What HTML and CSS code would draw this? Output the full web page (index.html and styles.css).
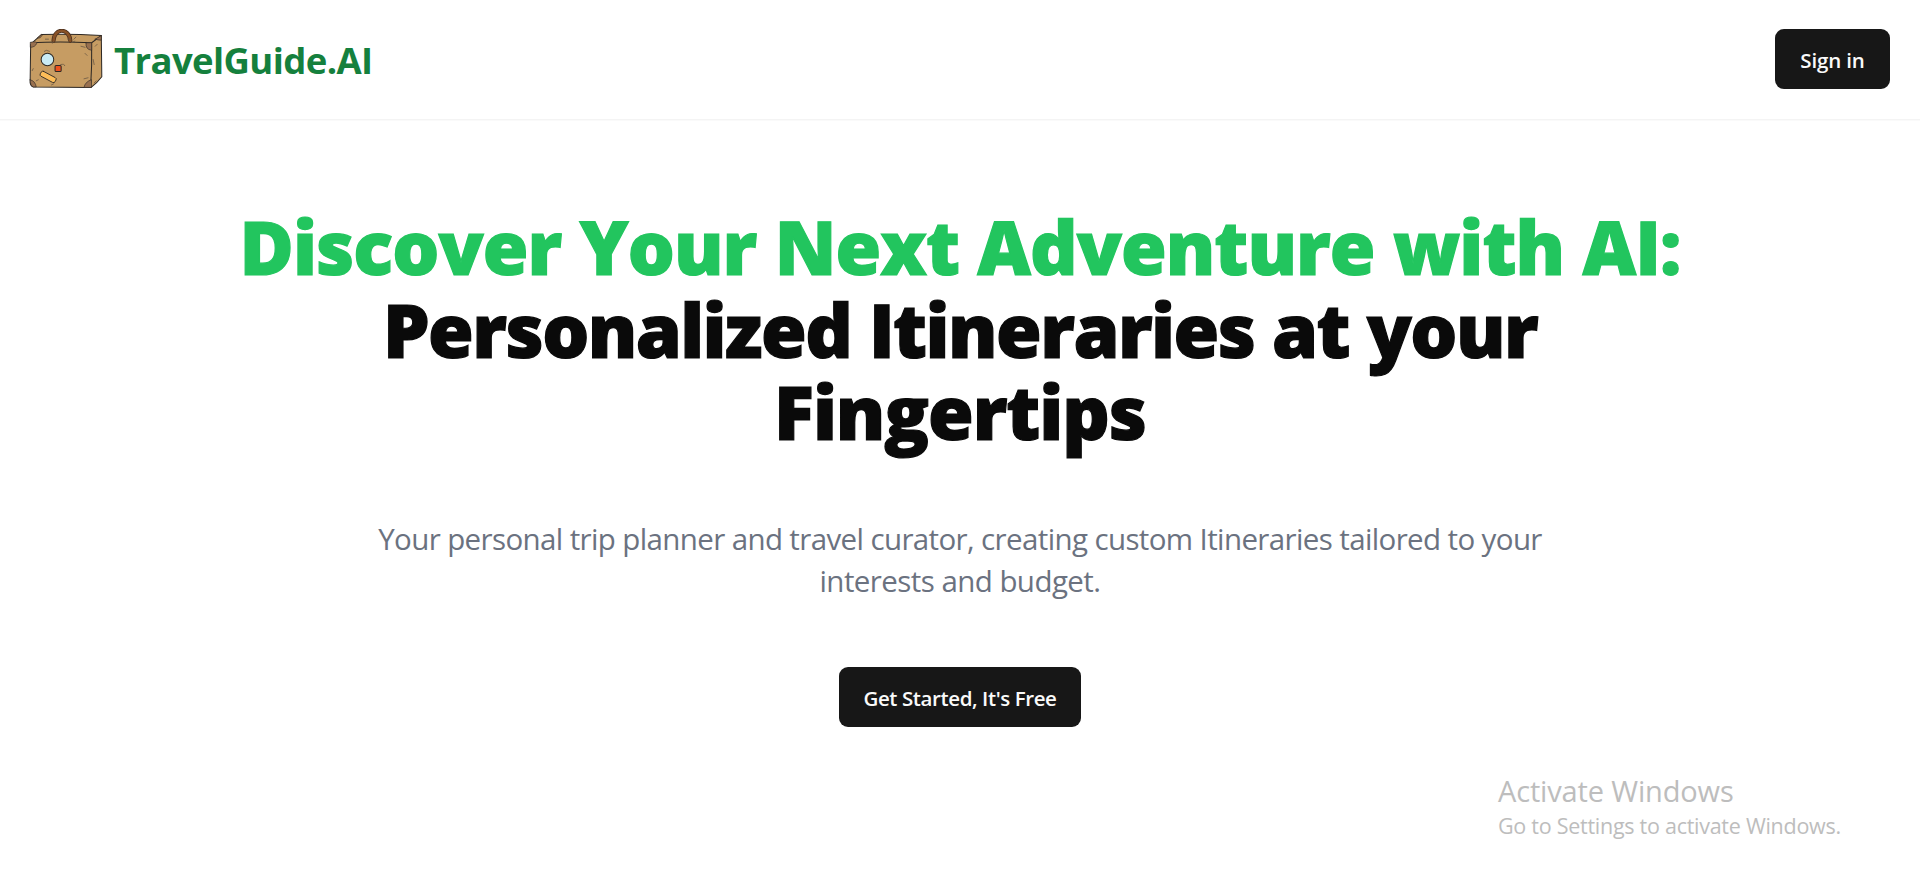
FILE: index.html
```html
<!DOCTYPE html>
<html lang="en">
<head>
<meta charset="utf-8">
<title>TravelGuide.AI</title>
<link rel="stylesheet" href="styles.css">
</head>
<body>
<header class="topbar">
  <a class="brand">
    <svg class="brand-icon" viewBox="0 0 75 62" fill="none" stroke="#2d2824" stroke-width="1" stroke-linecap="round" stroke-linejoin="round">
      <path d="M1.5 15 L12 5.5 Q40 4.5 71 6.5 L71.5 47 Q67 53 61 57.5 L4 57 Q0.500 56 1 50 Z" fill="#c69c63"/>
      <path d="M1.500 13.500 Q30 12 61.500 13.500 Q62 36 60.500 57.500 M61.500 13.500 L71 6.500"/>
      <path d="M1.500 13 Q8 12 7.500 14 Q6 18 1.500 18 Z M56 13.500 L61.500 13.500 V21 Q55 20 56 13.500 Z M1 50 Q6 51 7 57 H4 Q1 56 1 50 Z M61 50 Q55 52 54 57.500 H61 Z M65 10 L71 6.500 V11 Q68 11 65 10 Z M12 5.500 L8 9 Q11 10 13 6 Z" fill="#99704f" stroke-width=".6"/>
      <path d="M24 11.500 C24.500 -1.500 39.500 -1.500 40.500 11.500" stroke="#4a2f1d" stroke-width="4"/>
      <path d="M24 11.500 C24.500 -1.500 39.500 -1.500 40.500 11.500" stroke="#885126" stroke-width="2.600"/>
      <circle cx="18" cy="30" r="6.200" fill="#c9ebf6"/>
      <rect x="25.500" y="36" width="6" height="5.800" rx="1" fill="#ee511e"/>
      <rect x="10.500" y="44.500" width="16.500" height="5.400" rx="1.800" transform="rotate(28 18.800 47)" fill="#fdbd58" stroke-width=".8"/>
      <path d="M15 22l2-1 3 1M31 35q4-1 4 1M3 41l1-2M7 51l2-1M22 55l2-1M38 10l3 0M44 10l2-2M16 10l3 0M55 24l2 2M63 30l1 5M64 53l2-2M51 17l4 1M54 49l4-1M65 17l2-2M23 14l1-2M42 13l3-1" stroke="#6e5a45" stroke-width=".8"/>
    </svg>
    <span class="brand-name">TravelGuide.AI</span>
  </a>
  <button class="button sign-in">Sign in</button>
</header>
<main class="hero">
  <h1 class="headline">
    <span class="headline-accent">Discover Your Next Adventure with AI:</span>
    <span class="headline-main">Personalized Itineraries at your</span>
    <span class="headline-end">Fingertips</span>
  </h1>
  <p class="lead"><span class="lead-line">Your personal trip planner and travel curator, creating custom Itineraries tailored to your</span> <span class="lead-line lead-end">interests and budget.</span></p>
  <button class="button start">Get Started, It's Free</button>
</main>
<aside class="watermark">
  <div class="watermark-title">Activate Windows</div>
  <div class="watermark-text">Go to Settings to activate Windows.</div>
</aside>
</body>
</html>
```
FILE: styles.css
```css
* { box-sizing: border-box; }

body {
  margin: 0;
  height: 883px;
  overflow: hidden;
  background: #fff;
  color: #0a0a0a;
  font-family: "Open Sans", "Noto Sans", sans-serif;
}

.topbar {
  display: flex;
  align-items: flex-start;
  justify-content: space-between;
  height: 120px;
  padding: 29px 30px 0 29px;
  border-bottom: 1px solid #f4f4f4;
  box-shadow: 0 1px 1px rgba(0, 0, 0, .02);
}

.brand { display: flex; align-items: flex-start; gap: 8.5px; }
.brand-icon { width: 76.5px; height: 63px; }
.brand-name {
  padding-top: 6px;
  color: #15803d;
  font-size: 36.5px;
  font-weight: 700;
  line-height: 50px;
  letter-spacing: -.62px;
  white-space: nowrap;
}

.button {
  height: 60px;
  padding: 2px 0 0;
  border: 0;
  border-radius: 9px;
  background: #171717;
  color: #fafafa;
  font: 600 20.5px/28px "Open Sans", sans-serif;
  letter-spacing: -.4px;
  white-space: nowrap;
}
.sign-in { width: 115px; letter-spacing: -.15px; }
.start { width: 242px; }

.hero { display: flex; flex-direction: column; align-items: center; }

.headline {
  display: flex;
  flex-direction: column;
  align-items: center;
  margin: 86px 0 0;
  font-size: 74px;
  font-weight: 800;
  line-height: 82.5px;
  white-space: nowrap;
  -webkit-text-stroke: 1.2px currentColor;
}
.headline-accent { color: #22c55e; letter-spacing: -.95px; }
.headline-main { letter-spacing: -1.57px; }
.headline-end { letter-spacing: -1.1px; }

.lead {
  display: flex;
  flex-direction: column;
  align-items: center;
  margin: 64px 0 0;
  color: #6b7280;
  font-size: 29.5px;
  line-height: 42px;
  letter-spacing: -.62px;
  white-space: nowrap;
}
.lead-end { letter-spacing: -.56px; }

.start { margin-top: 65px; }

.watermark {
  position: absolute;
  left: 1498px;
  top: 771px;
  color: #bdbdbd;
  white-space: nowrap;
}
.watermark-title { font-size: 29px; line-height: 40px; letter-spacing: -.15px; }
.watermark-text { font-size: 21.5px; line-height: 30px; letter-spacing: -.27px; }
```
